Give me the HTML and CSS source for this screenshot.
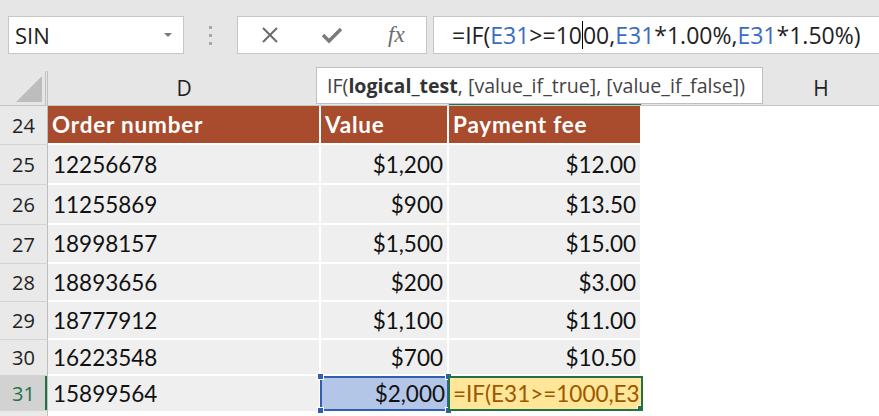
FILE: index.html
```html
<!DOCTYPE html>
<html>
<head>
<meta charset="utf-8">
<link rel="stylesheet" href="styles.css">
</head>
<body>
<div class="topbar">
  <div class="namebox"><span class="nb-text">SIN</span><span class="dd"></span></div>
  <div class="grip"><i></i><i></i><i></i></div>
  <div class="btns">
    <svg class="ico" width="20" height="20" viewBox="0 0 20 20"><path d="M3 3 L17 17 M17 3 L3 17" stroke="#6b6b6b" stroke-width="2" fill="none"/></svg>
    <svg class="ico" width="22" height="20" viewBox="0 0 22 20"><path d="M2 10 L8 16 L20 4" stroke="#7a7a7a" stroke-width="3.4" fill="none" stroke-linejoin="miter"/></svg>
    <span class="fx">fx</span>
  </div>
  <div class="formula">=IF(<span class="ref">E31</span>&gt;=10<span class="caret"></span>00,<span class="ref">E31</span>*1.00%,<span class="ref">E31</span>*1.50%)</div>
</div>
<div class="colhead">
  <div class="corner"><svg width="26" height="26" viewBox="0 0 26 26"><path d="M26 0 L26 26 L0 26 Z" fill="#bdbdbd"/></svg></div>
  <div class="ch">D</div>
  <div class="ch"></div>
  <div class="ch active-col"></div>
  <div class="ch"></div>
  <div class="ch last">H</div>
</div>
<div class="tooltip">IF(<b>logical_test</b>, [value_if_true], [value_if_false])</div>
<div class="sheet">
  <div class="row head">
    <div class="rh">24</div><div class="c">Order number</div><div class="c">Value</div><div class="c">Payment fee</div><div class="blank"></div>
  </div>
  <div class="row">
    <div class="rh">25</div><div class="c">12256678</div><div class="c num">$1,200</div><div class="c num">$12.00</div><div class="blank"></div>
  </div>
  <div class="row">
    <div class="rh">26</div><div class="c">11255869</div><div class="c num">$900</div><div class="c num">$13.50</div><div class="blank"></div>
  </div>
  <div class="row">
    <div class="rh">27</div><div class="c">18998157</div><div class="c num">$1,500</div><div class="c num">$15.00</div><div class="blank"></div>
  </div>
  <div class="row">
    <div class="rh">28</div><div class="c">18893656</div><div class="c num">$200</div><div class="c num">$3.00</div><div class="blank"></div>
  </div>
  <div class="row">
    <div class="rh">29</div><div class="c">18777912</div><div class="c num">$1,100</div><div class="c num">$11.00</div><div class="blank"></div>
  </div>
  <div class="row">
    <div class="rh">30</div><div class="c">16223548</div><div class="c num">$700</div><div class="c num">$10.50</div><div class="blank"></div>
  </div>
  <div class="row cur">
    <div class="rh">31</div><div class="c">15899564</div>
    <div class="c num sel">$2,000<i class="h tl"></i><i class="h tr"></i><i class="h bl"></i><i class="h br"></i></div>
    <div class="c edit">=IF(E31&gt;=1000,E31*1.00%,E31*1.50%)<i class="h gbr"></i></div>
    <div class="blank"></div>
  </div>
  <div class="row tail">
    <div class="rh"></div><div class="blank"></div>
  </div>
</div>
</body>
</html>
```
FILE: styles.css
```css
* { box-sizing: border-box; }
html, body { margin: 0; padding: 0; }
body {
  width: 879px;
  height: 416px;
  overflow: hidden;
  background: #e6e6e6;
  font-family: "Open Sans", "Noto Sans", sans-serif;
  position: relative;
}

/* formula bar */
.topbar {
  height: 71px;
  display: flex;
  align-items: flex-start;
  padding: 16px 0 0 8px;
}
.namebox {
  width: 176px;
  height: 38px;
  background: #fff;
  border: 1px solid #c6c6c6;
  display: flex;
  align-items: center;
  justify-content: space-between;
  padding: 0 11px 0 6px;
  font-size: 22px;
  color: #222;
}
.dd {
  width: 0; height: 0;
  border-left: 4px solid transparent;
  border-right: 4px solid transparent;
  border-top: 4px solid #7a7a7a;
}
.grip {
  width: 53px;
  height: 38px;
  display: flex;
  flex-direction: column;
  align-items: center;
  justify-content: center;
  gap: 5px;
}
.grip i { width: 3px; height: 3px; background: #a8a8a8; display: block; }
.btns {
  width: 190px;
  height: 38px;
  background: #fff;
  border: 1px solid #c6c6c6;
  display: flex;
  align-items: center;
  padding-left: 22px;
  gap: 41px;
}
.fx {
  font-family: "Liberation Serif", "DejaVu Serif", serif;
  font-style: italic;
  font-size: 23px;
  color: #6b6b6b;
  margin-left: 4px;
}
.formula {
  flex: 1;
  margin-left: 6px;
  height: 38px;
  background: #fff;
  border: 1px solid #c6c6c6;
  border-right: none;
  display: flex;
  align-items: center;
  padding-left: 18px;
  font-size: 23px;
  color: #222;
  white-space: nowrap;
}
.ref { color: #3a6cc0; }
.caret { display: inline-block; width: 1px; height: 28px; background: #000; }

/* column headers */
.colhead {
  height: 35px;
  display: grid;
  grid-template-columns: 48px 273px 128px 193px 121px 1fr;
  border-bottom: 1px solid #c6c6c6;
}
.corner {
  border-right: 3px double #c0c0c0;
  display: flex;
  align-items: flex-end;
  justify-content: flex-end;
  padding: 0 3px 3px 0;
}
.ch {
  display: flex;
  align-items: center;
  justify-content: center;
  font-size: 21px;
  color: #222;
  border-right: 1px solid #d0d0d0;
}
.ch.last { border-right: none; }
.active-col { box-shadow: inset 0 -2px 0 #217346; }

.tooltip {
  position: absolute;
  left: 316px;
  top: 67px;
  width: 447px;
  height: 37px;
  background: #fff;
  border: 1px solid #bfbfbf;
  display: flex;
  align-items: center;
  padding-left: 10px;
  font-size: 19.6px;
  color: #444;
  white-space: nowrap;
}
.tooltip b { color: #333; }

/* sheet */
.sheet { background: #fff; }
.row {
  display: grid;
  grid-template-columns: 48px 273px 128px 193px 1fr;
  height: 40px;
}
.row:nth-child(1) { height: 39px; }
.row:nth-child(4) { height: 39px; }
.row:nth-child(5), .row:nth-child(6) { height: 38px; }
.row:nth-child(7) { height: 36px; }
.row:nth-child(8) { height: 35px; }
.row.tail { height: 10px; }

.rh {
  background: #e9e9e9;
  border-right: 1px solid #bfbfbf;
  border-bottom: 1px solid #d3d3d3;
  display: flex;
  align-items: center;
  justify-content: center;
  font-size: 20px;
  color: #222;
}
.c {
  background: #efefef;
  border-right: 2px solid #fff;
  border-bottom: 2px solid #fff;
  display: flex;
  align-items: center;
  padding: 0 4px 0 5px;
  font-family: "Lato", "Open Sans", sans-serif;
  font-size: 22.5px;
  color: #111;
  white-space: nowrap;
  position: relative;
}
.c.num { justify-content: flex-end; }
.row.head .c {
  background: #a84c2d;
  color: #fff;
  font-weight: bold;
  padding-left: 4px;
  letter-spacing: 0.8px;
}
.blank { background: #fff; }

.cur .rh {
  background: #d2d2d2;
  color: #217346;
  box-shadow: inset -2px 0 0 #217346;
}
.cur .c { border-bottom: none; }
.c.sel {
  background: #b4c6e7;
  border: 2px solid #2f5fae;
  padding-right: 2px;
  margin-left: -1px;
}
.c.edit {
  background: #ffe699;
  border: 2px solid #217346;
  color: #9c5700;
  padding-left: 3px;
  margin-left: -1px;
  margin-right: -1px;
  overflow: hidden;
}
.h {
  position: absolute;
  width: 7px;
  height: 7px;
  background: #2f5fae;
  border: 1px solid #fff;
}
.tl { left: -5px; top: -5px; }
.tr { right: -5px; top: -5px; }
.bl { left: -5px; bottom: -5px; }
.br { right: -5px; bottom: -5px; }
.gbr { right: -2px; bottom: -2px; background: #217346; width: 6px; height: 6px; }
```
